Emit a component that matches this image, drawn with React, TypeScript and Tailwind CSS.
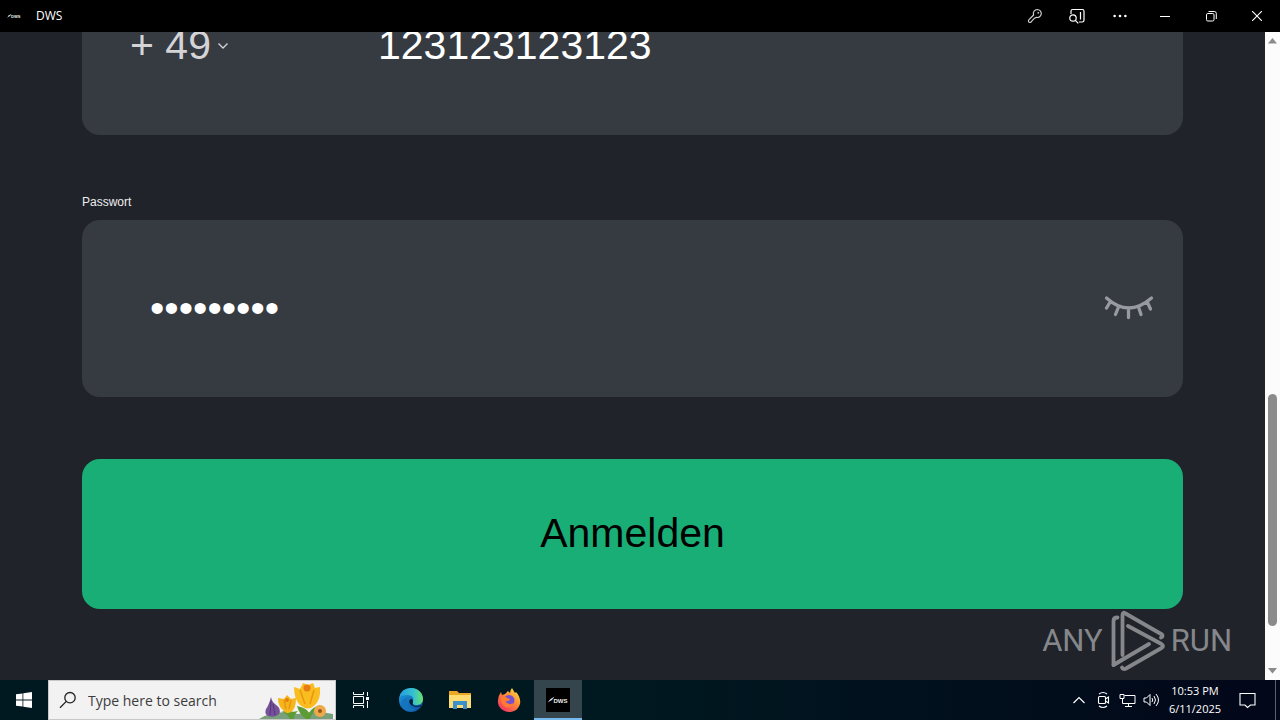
import React, { useState } from "react";

const titleButton = "flex h-8 items-center justify-center";

function KeyIcon() {
  return (
    <svg width="16" height="16" viewBox="0 0 16 16" fill="none" stroke="#d0d0d0" strokeWidth="1.2" strokeLinejoin="round">
      <path d="M10.3 1.5a4 4 0 1 1-.9 7.9L7.500 10.200 4.300 13.700Q2.500 15.300 1.600 13.700Q1 12.600 2.200 11.400L6.600 7a4 4 0 0 1 3.700-5.500Z" />
      <circle cx="11.300" cy="4.800" r=".9" fill="#d0d0d0" stroke="none" />
    </svg>
  );
}

function SearchTabIcon() {
  return (
    <svg width="18" height="18" viewBox="0 0 18 18" fill="none" stroke="#fff" strokeWidth="1.200">
      <path d="M3 7V4.200Q3 2.500 4.700 2.500H14.300Q16 2.500 16 4.200V13.300Q16 15 14.300 15H11M12.500 5V12.500" />
      <circle cx="5" cy="11" r="3.200" />
      <path d="m7.300 13.300 3 3" />
    </svg>
  );
}

function DwsLogo({ className }: { className: string }) {
  return (
    <svg className={className} viewBox="0 0 24 24" aria-hidden="true">
      <rect width="24" height="24" fill="#000" />
      <path d="m1.500 14.500 3-3.500L8.500 8.500 6 12Z" fill="#ddd" />
      <text x="7.500" y="14.500" fill="#eee" fontSize="6" fontWeight="700" fontFamily="Liberation Sans, sans-serif">DWS</text>
    </svg>
  );
}

function TitleBar() {
  return (
    <header className="flex h-8 shrink-0 items-center bg-black font-['Open_Sans',sans-serif] text-white">
      <DwsLogo className="ml-1.5 size-4" />
      <span className="ml-3.5 text-[12px]">DWS</span>
      <div className="ml-auto flex items-center">
        <button aria-label="Passwords" className={`${titleButton} w-[42px]`}><KeyIcon /></button>
        <button aria-label="Search in page" className={`${titleButton} w-[42px]`}><SearchTabIcon /></button>
        <button aria-label="More" className={`${titleButton} w-[44px]`}>
          <svg width="14" height="4" viewBox="0 0 14 4" fill="#fff"><circle cx="1.600" cy="2" r="1.300" /><circle cx="7" cy="2" r="1.300" /><circle cx="12.400" cy="2" r="1.300" /></svg>
        </button>
        <button aria-label="Minimize" className={`${titleButton} w-[46px]`}>
          <svg width="10" height="10" stroke="#fff"><path d="M0 5.500H10" /></svg>
        </button>
        <button aria-label="Restore" className={`${titleButton} w-[46px]`}>
          <svg width="11" height="11" viewBox="0 0 11 11" fill="none" stroke="#fff"><rect x=".5" y="2.500" width="7.500" height="7.500" rx="1.300" /><path d="M2.500 .5H8.300Q10.300 .5 10.300 2.500V8" /></svg>
        </button>
        <button aria-label="Close" className={`${titleButton} w-[46px]`}>
          <svg width="10" height="10" viewBox="0 0 10 10" stroke="#fff" strokeWidth="1.100"><path d="M0 0 10 10M10 0 0 10" /></svg>
        </button>
      </div>
    </header>
  );
}

function ClosedEye() {
  return (
    <svg width="50" height="28" viewBox="0 0 50 28" fill="none" stroke="#979a9f" strokeWidth="3.300" strokeLinecap="round">
      <path d="M2.500 3Q24.500 23 47.500 3M6.500 6.500 2.500 13M14.500 12 11.500 19.500M24.500 13.500V22.500M34.500 12 37 19.500M43 6.500 46.500 14" />
    </svg>
  );
}

function LoginForm() {
  const [phone, setPhone] = useState("123123123123");
  const [password, setPassword] = useState("anmelden1");
  const [hidden, setHidden] = useState(true);
  return (
    <form
      onSubmit={(e) => e.preventDefault()}
      className="flex min-w-0 flex-1 flex-col justify-end overflow-hidden bg-[#20232a] px-[82px] pb-[71px] font-['Liberation_Sans',Arial,sans-serif]"
    >
      <div className="flex h-[177px] shrink-0 items-center rounded-[18px] bg-[#363a41] pb-0.5 text-[41px]">
        <button type="button" aria-label="Country code" className="flex w-[296px] items-center gap-1.5 pl-12 text-[#d4d4d6]">
          + 49
          <svg width="12" height="8" viewBox="0 0 12 8" fill="none" stroke="currentColor" strokeWidth="1.300"><path d="m1.500 1.500 4.500 4.500 4.500-4.500" /></svg>
        </button>
        <input aria-label="Telefonnummer" type="tel" value={phone} onChange={(e) => setPhone(e.target.value)} className="min-w-0 flex-1 bg-transparent text-white outline-none" />
      </div>
      <label htmlFor="password" className="mt-[59px] mb-2.5 text-[12px] leading-4 text-[#eeeeee]">Passwort</label>
      <div className="flex h-[177px] shrink-0 items-center rounded-[18px] bg-[#363a41] pr-[29px] pl-[68px]">
        <input id="password" type={hidden ? "password" : "text"} value={password} onChange={(e) => setPassword(e.target.value)} className="min-w-0 flex-1 bg-transparent text-[41px] text-white outline-none" />
        <button type="button" aria-label="Passwort anzeigen" onClick={() => setHidden(!hidden)}><ClosedEye /></button>
      </div>
      <button type="submit" className="mt-[62px] h-[150px] shrink-0 rounded-[18px] bg-[#19ae76] text-[41px] text-black">Anmelden</button>
    </form>
  );
}

function ScrollBar() {
  return (
    <div className="flex w-[15px] shrink-0 flex-col items-center bg-[#fcfcfc]" aria-hidden="true">
      <svg className="mt-1.5" width="9" height="6" viewBox="0 0 9 6" fill="#8b8b8b"><path d="M4.500 0 9 5.500H0Z" /></svg>
      <div className="grow-[350]" />
      <div className="w-[9px] grow-[232] rounded-full bg-[#8b8b8b]" />
      <div className="grow-[42]" />
      <svg className="mb-1.5" width="9" height="6" viewBox="0 0 9 6" fill="#8b8b8b"><path d="M4.500 5.500 0 0H9Z" /></svg>
    </div>
  );
}

function Watermark() {
  return (
    <div className="pointer-events-none absolute right-12 bottom-2 flex items-center gap-1 font-['Roboto',sans-serif] text-[31px] leading-none text-[#85878b]">
      <span>ANY</span>
      <svg width="60" height="64" viewBox="-2 0 60 64" fill="none" stroke="#85878b" strokeWidth="3.800" strokeLinejoin="round" strokeLinecap="round">
        <path d="M8.500 9.500Q4.500 9.500 4.500 13V57L40 36" />
        <path d="M13.500 47V7Q13.500 3.500 16.500 5.500L53 26.500Q54.500 28.500 52 29.500" />
        <path d="M19 18 52.500 36Q55.500 38 52.500 40L17 60.500Q14 62 13 59.500" />
        <path d="M4.500 57 13.500 51.500" />
      </svg>
      <span>RUN</span>
    </div>
  );
}

function Flowers() {
  return (
    <svg width="80" height="38" viewBox="0 0 80 38" aria-hidden="true">
      <path d="M4 38Q20 28 43 33Q60 29 78 33V38Z" fill="#78a07a" />
      <path d="M26 31Q31 31 35 38H39Q39 33 43 30Q36 32 33 29ZM42 25Q44 33 51 38H55Q57 31 66 24Q57 26 54 32Q52 27 42 25Z" fill="#5d9b35" />
      <path d="M16 16Q17 21 20 23Q27 28 24 33Q20 37 13 35Q9 33 11 28Q14 24 16 16Z" fill="#76519a" />
      <path d="M16 20 15 34M18 23 20 34" stroke="#513579" />
      <path d="M23 17 29 18 32 14 36 18 41 17Q41 28 36 31Q31 34 28 29Q23 25 23 17Z" fill="#f5b51c" />
      <path d="M39 6 45 8 48 2 53 4 58 2 60 7 65 6Q66 18 60 24Q53 31 45 24Q39 18 39 6Z" fill="#f9bd20" />
      <path d="m45 9 5 14M59 9 55 23M29 19 31 28M36 19 34 28" fill="none" stroke="#e9970f" strokeWidth="1.500" />
      <circle cx="52" cy="7" r="3.500" fill="#e87b12" /><circle cx="32" cy="19" r="2" fill="#e87b12" />
      <circle cx="65" cy="30" r="6" fill="#eeaa48" /><circle cx="65" cy="30" r="2" fill="#985321" />
    </svg>
  );
}

function Taskbar() {
  return (
    <footer className="flex h-10 shrink-0 bg-linear-to-r from-[#001820] via-[#001820] to-[#020719] font-['Open_Sans',sans-serif] text-white">
      <button aria-label="Start" className="flex w-12 items-center justify-center">
        <svg width="16" height="16" viewBox="0 0 16 16" fill="#fff"><path d="M0 2.300 6.500 1.400V7.600H0ZM7.300 1.300 16 0V7.600H7.300ZM0 8.400H6.500V14.600L0 13.700ZM7.300 8.400H16V16L7.300 14.700Z" /></svg>
      </button>
      <div className="flex w-72 items-center border border-[#c8c8c8] bg-[#f2f2f2] pl-2.5 text-[#333333]">
        <svg width="18" height="18" viewBox="0 0 18 18" fill="none" stroke="#222" strokeWidth="1.300"><circle cx="11" cy="6.700" r="5.200" /><path d="M7.300 10.400 1 16.700" /></svg>
        <input aria-label="Search" placeholder="Type here to search" className="ml-[11px] min-w-0 flex-1 bg-transparent text-[14px] outline-none placeholder:text-[#3c3c3c]" />
        <Flowers />
      </div>
      <button aria-label="Task view" className="flex w-12 items-center justify-center">
        <svg width="17" height="16" viewBox="0 0 17 16" fill="none" stroke="#fff"><path d="M1.500 0V2.500H11.500V0M1.500 16V13.500H11.500V16M1.500 4.500H11.500V11.500H1.500ZM15.500 0V4M15.500 9V16" /><path d="M14 5H17V8H14Z" fill="#fff" stroke="none" /></svg>
      </button>
      <button aria-label="Microsoft Edge" className="ml-0.5 flex w-[49px] items-center justify-center">
        <svg width="24" height="24" viewBox="0 0 24 24">
          <defs>
            <linearGradient id="edgeTop"><stop offset="0" stopColor="#259ddb" /><stop offset=".6" stopColor="#35c1cf" /><stop offset="1" stopColor="#6be26c" /></linearGradient>
            <linearGradient id="edgeLow" x2="1" y2="1"><stop offset="0" stopColor="#1a9fe0" /><stop offset="1" stopColor="#104b9c" /></linearGradient>
          </defs>
          <circle cx="12" cy="12" r="12" fill="url(#edgeLow)" />
          <path d="M.2 10Q2 0 12 0C20 0 24 6 24 11C24 16 20 17 17 17Q13 17 14 14Q16 8 9 7Q2 7 .2 10Z" fill="url(#edgeTop)" />
          <path d="M9 10C5 15 10 22 17 21C11 25 3 22 2 16Q2 10 9 10Z" fill="#1673bd" />
          <path d="M14 14C12 18 18 19 22.300 17L21.500 18.500C14 20 9 16 10.500 12Q14 9.500 14 14Z" fill="#061d36" />
        </svg>
      </button>
      <button aria-label="File Explorer" className="flex w-[49px] items-center justify-center">
        <svg width="22" height="20" viewBox="0 0 22 20"><path d="M0 1H8L10 3H22V18H0Z" fill="#e9a725" /><path d="M0 5H22V18H0Z" fill="#ffdc72" /><path d="M4 11H18V19H14V15H8V19H4Z" fill="#3c91cb" /></svg>
      </button>
      <button aria-label="Firefox" className="flex w-[49px] items-center justify-center">
        <svg width="24" height="24" viewBox="0 0 24 24">
          <defs><linearGradient id="fox" x1="1" x2=".2" y2="1"><stop offset="0" stopColor="#fff04a" /><stop offset=".45" stopColor="#ff9135" /><stop offset="1" stopColor="#f12f65" /></linearGradient></defs>
          <path d="M4 4 5 7 8 6 11 3 13 5Q13 2 15 0L18 5 19 4C22 7 24 12 23 16C21 22 17 24 12 24C5 24 0 18 1 12Q1 8 4 4Z" fill="url(#fox)" />
          <circle cx="12" cy="12.500" r="5.500" fill="#7651ce" /><path d="M4 9Q8 7 10 10L13 11Q12 14 8 13Q11 18 17 15C14 23 3 20 4 9Z" fill="#ff7b32" />
        </svg>
      </button>
      <button aria-label="DWS" className="ml-px flex w-12 items-center justify-center border-b-2 border-[#76b9ed] bg-[#34454e] pt-0.5">
        <DwsLogo className="size-6" />
      </button>
      <div className="ml-auto flex items-center">
        <button aria-label="Show hidden icons" className="flex w-6 justify-center"><svg width="12" height="8" viewBox="0 0 12 8" fill="none" stroke="#fff" strokeWidth="1.200"><path d="m.5 7 5.500-5.500L11.500 7" /></svg></button>
        <button aria-label="Meet now" className="flex w-6 justify-center"><svg width="14" height="18" viewBox="0 0 14 18" fill="none" stroke="#fff" strokeWidth="1.100"><rect x="2.500" y="5.500" width="7" height="7" rx="1" /><path d="m9.500 8 3-2V12l-3-2M3 3Q7 0 11 3M3 15Q7 18 11 15" /></svg></button>
        <button aria-label="Network" className="flex w-6 justify-center"><svg width="17" height="15" viewBox="0 0 17 15" fill="none" stroke="#fff"><path d="M5.500 2.500H16V10.500H3.500V6M1 1.500H5V5.500H1ZM9.500 10.500V13.500M6 13.500H13" /></svg></button>
        <button aria-label="Volume" className="flex w-6 justify-center"><svg width="17" height="14" viewBox="0 0 17 14" fill="none" stroke="#fff"><path d="M1 5H3.500L7 1.500V12.500L3.500 9H1ZM9 5Q10.500 7 9 9M11 3Q14 7 11 11M13 1Q18 7 13 13" /></svg></button>
        <div className="w-16 text-center text-[11px] leading-[18px]"><div>10:53 PM</div><div>6/11/2025</div></div>
        <button aria-label="Notifications" className="flex w-10 justify-center"><svg width="17" height="17" viewBox="0 0 17 17" fill="none" stroke="#fff" strokeWidth="1.100"><path d="M1 1.500H16V13H11.500L8.500 15.500 6 13H1Z" /></svg></button>
        <div className="ml-2 h-10 w-[5px] border-l border-[#596170]" />
      </div>
    </footer>
  );
}

export default function App() {
  return (
    <div className="flex h-screen flex-col overflow-hidden">
      <TitleBar />
      <main className="relative flex min-h-0 flex-1">
        <LoginForm />
        <ScrollBar />
        <Watermark />
      </main>
      <Taskbar />
    </div>
  );
}
